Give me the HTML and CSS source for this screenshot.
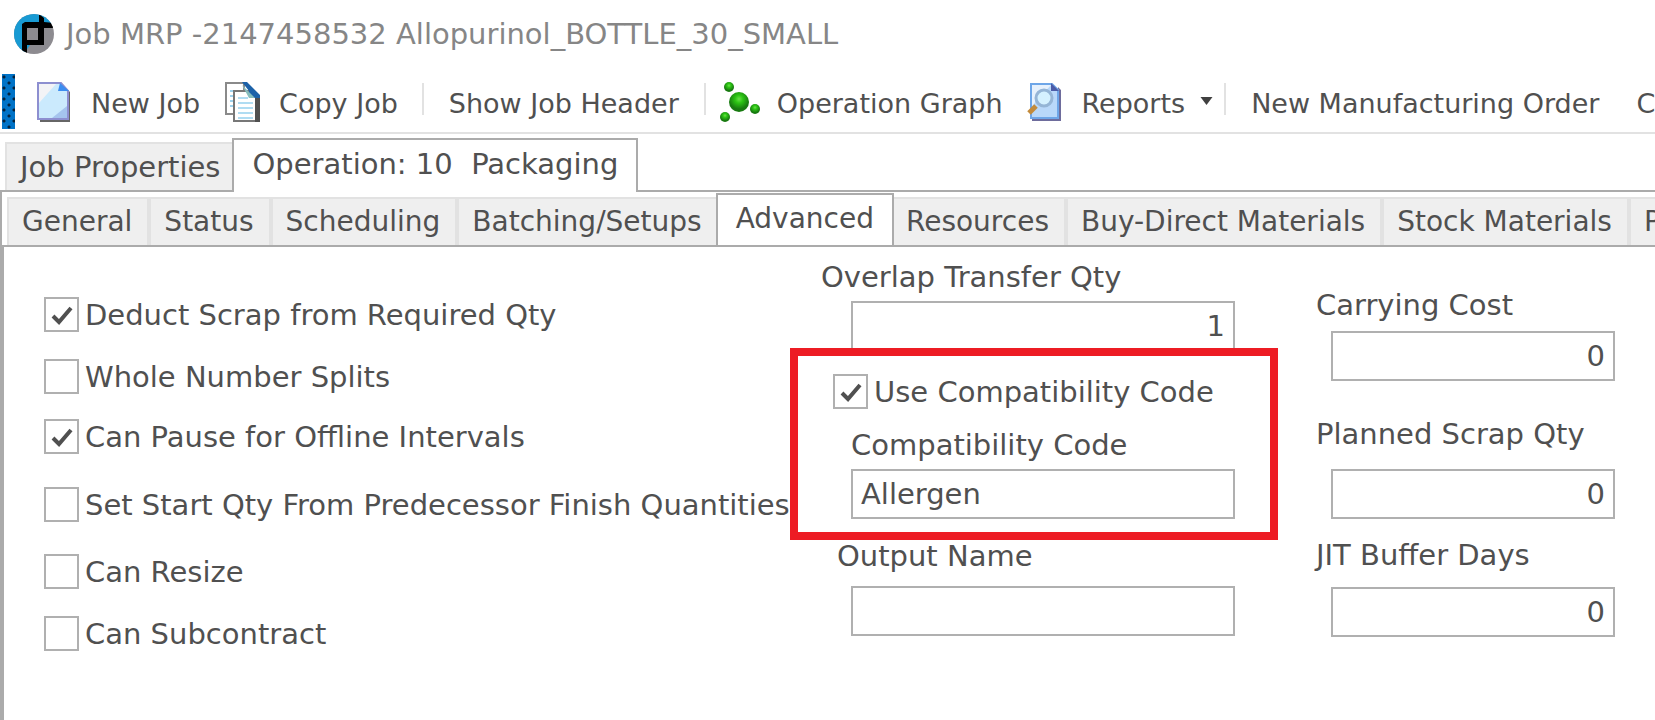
FILE: index.html
```html
<!DOCTYPE html>
<html lang="en">
<head>
	<meta charset="utf-8">
	<title>Job MRP</title>
	<link rel="stylesheet" href="styles.css">
</head>
<body>
	<header class="titlebar">
		<svg class="logo" viewBox="0 0 40 40" aria-hidden="true">
			<defs><clipPath id="disc"><circle cx="20" cy="20" r="20"/></clipPath></defs>
			<g clip-path="url(#disc)">
				<rect width="40" height="40" fill="#8d8b90"/>
				<path d="M0 0H30V10L10 40H0z" fill="#189ad3"/>
				<path d="M30 0H40V10H30z" fill="#189ad3"/>
				<path d="M25 0L30 4V8L40 9V14H30V31H13V40H8V10L11 8H25z" fill="#000"/>
				<rect x="13" y="14" width="11" height="12" fill="#8d8b90"/>
			</g>
		</svg>
		<h1>Job MRP -2147458532 Allopurinol_BOTTLE_30_SMALL</h1>
	</header>

	<div class="toolbar" role="toolbar">
		<span class="grip"></span>
		<button>
			<svg class="icon" viewBox="0 0 40 40" aria-hidden="true">
				<path d="M4 38V40H34V10L32 8V38z" fill="#666"/>
				<path d="M2 1H25L32 9V37H2z" fill="#cbeafd" stroke="#8d8fd0" stroke-width="2"/>
				<path d="M3 2H20L3 21z" fill="#f3f3f6"/>
				<path d="M31 24V36H16z" fill="#a5c4ee"/>
				<path d="M24 1L33 9H22z" fill="#3c8df0"/>
			</svg>
			New Job
		</button>
		<button>
			<svg class="icon" viewBox="0 0 40 40" aria-hidden="true">
				<path d="M2 1H20V32H2z" fill="#fff" stroke="#8a8a8a" stroke-width="2"/>
				<path d="M6 9H10M6 14H10M6 19H10M6 24H10" stroke="#9ed3ee" stroke-width="2"/>
				<path d="M10 9H25L33 15V39H10z" fill="#fff" stroke="#777" stroke-width="2"/>
				<path d="M31 14L36 13V40H31z" fill="#505050"/>
				<path d="M14 16H24M14 21H29M14 26H29M14 31H29M14 36H29" stroke="#b0dcf2" stroke-width="2"/>
				<path d="M18 0H23L36 13V16H25V9z" fill="#1c61a8"/>
				<path d="M18 3L25 16H31z" fill="#86bdbd"/>
			</svg>
			Copy Job
		</button>
		<span class="separator"></span>
		<button class="text-only">Show Job Header</button>
		<span class="separator"></span>
		<button class="graph">
			<svg class="icon" viewBox="0 0 40 40" aria-hidden="true">
				<defs>
					<radialGradient id="ball" cx="50%" cy="35%">
						<stop offset="0" stop-color="#6be04a"/>
						<stop offset="0.4" stop-color="#2cc414"/>
						<stop offset="1" stop-color="#187a10"/>
					</radialGradient>
				</defs>
				<circle cx="9" cy="5" r="5" fill="url(#ball)"/>
				<circle cx="19" cy="20" r="10" fill="url(#ball)"/>
				<circle cx="35" cy="27" r="5" fill="url(#ball)"/>
				<circle cx="5" cy="35" r="5" fill="url(#ball)"/>
			</svg>
			Operation Graph
		</button>
		<button class="reports">
			<svg class="icon" viewBox="0 0 40 40" aria-hidden="true">
				<path d="M7 36V39H36V8L33 5V36z" fill="#6e6c9c"/>
				<path d="M6 2H27L33 8V36H6z" fill="#b9d8fa" stroke="#6ea6e8" stroke-width="2"/>
				<path d="M7 3H26L7 24z" fill="#e6f1fd"/>
				<path d="M26 1L34 9H26z" fill="#4c5ca8"/>
				<path d="M11 24L4 31" stroke="#c38b3c" stroke-width="5"/>
				<circle cx="19" cy="16" r="8" fill="#d5f1ff" stroke="#95b5d6" stroke-width="3"/>
			</svg>
			Reports
			<svg class="arrow" viewBox="0 0 12 8" aria-hidden="true"><path d="M0 0H12L6 8z" fill="#404040"/></svg>
		</button>
		<span class="separator"></span>
		<button class="text-only">New Manufacturing Order</button>
		<button class="text-only">C</button>
	</div>

	<nav class="tabs job-tabs" role="tablist">
		<button role="tab">Job Properties</button>
		<button role="tab" class="active" aria-selected="true">Operation: 10&nbsp; Packaging</button>
	</nav>

	<main class="operation">
		<nav class="tabs detail-tabs" role="tablist">
			<button role="tab">General</button>
			<button role="tab">Status</button>
			<button role="tab">Scheduling</button>
			<button role="tab">Batching/Setups</button>
			<button role="tab" class="active" aria-selected="true">Advanced</button>
			<button role="tab">Resources</button>
			<button role="tab">Buy-Direct Materials</button>
			<button role="tab">Stock Materials</button>
			<button role="tab">P</button>
		</nav>

		<form class="advanced">
			<div class="options">
				<label class="check"><input type="checkbox" checked>Deduct Scrap from Required Qty</label>
				<label class="check"><input type="checkbox">Whole Number Splits</label>
				<label class="check"><input type="checkbox" checked>Can Pause for Offline Intervals</label>
				<label class="check"><input type="checkbox">Set Start Qty From Predecessor Finish Quantities</label>
				<label class="check"><input type="checkbox">Can Resize</label>
				<label class="check"><input type="checkbox">Can Subcontract</label>
			</div>

			<div class="codes">
				<div class="field overlap">
					<label for="overlap-qty">Overlap Transfer Qty</label>
					<input type="text" id="overlap-qty" class="number" value="1">
				</div>
				<div class="compatibility">
					<label class="check"><input type="checkbox" checked>Use Compatibility Code</label>
					<div class="field">
						<label for="compat-code">Compatibility Code</label>
						<input type="text" id="compat-code" value="Allergen">
					</div>
				</div>
				<div class="field output">
					<label for="output-name">Output Name</label>
					<input type="text" id="output-name">
				</div>
			</div>

			<div class="amounts">
				<div class="field">
					<label for="carrying-cost">Carrying Cost</label>
					<input type="text" id="carrying-cost" class="number" value="0">
				</div>
				<div class="field scrap">
					<label for="scrap-qty">Planned Scrap Qty</label>
					<input type="text" id="scrap-qty" class="number" value="0">
				</div>
				<div class="field buffer">
					<label for="buffer-days">JIT Buffer Days</label>
					<input type="text" id="buffer-days" class="number" value="0">
				</div>
			</div>
		</form>
	</main>
</body>
</html>
```
FILE: styles.css
```css
* {
	box-sizing: border-box;
}

body {
	margin: 0;
	min-height: 100vh;
	display: flex;
	flex-direction: column;
	overflow-x: hidden;
	font-family: Verdana, "DejaVu Sans", sans-serif;
	font-size: 29px;
	line-height: 32px;
	color: #505050;
	background: #fff;
}

button, input {
	font: inherit;
	color: inherit;
}

button {
	border: none;
	padding: 0;
	background: none;
	white-space: nowrap;
	cursor: pointer;
}

/* title bar */
.titlebar {
	display: flex;
	align-items: center;
	gap: 12px;
	height: 68px;
	padding-left: 14px;
}

.titlebar h1 {
	margin: 0;
	font-size: 29px;
	font-weight: normal;
	color: #868686;
	white-space: nowrap;
}

.logo {
	width: 40px;
	height: 40px;
}

/* toolbar */
.toolbar {
	display: flex;
	align-items: center;
	height: 66px;
	padding: 7px 0 0 2px;
	border-bottom: 2px solid #e2e2e2;
	font-size: 27px;
	overflow: hidden;
}

.toolbar > * {
	flex: none;
}

.toolbar button {
	display: flex;
	align-items: center;
	margin-right: 24px;
}

.toolbar .text-only {
	margin: 0 25px;
}

.toolbar .text-only + .text-only {
	margin-left: 12px;
}

.toolbar .graph {
	margin: 0 22px 0 14px;
}

.toolbar .reports {
	margin-right: 11px;
}

.grip {
	width: 13px;
	height: 55px;
	margin: 0 21px 4px 0;
	background:
		radial-gradient(circle at 2px 3px, #06223c 1px, transparent 2px) 0 0 / 10px 11px,
		radial-gradient(circle at 7px 9px, #06223c 1px, transparent 2px) 0 0 / 10px 11px,
		#0173c7;
}

.icon {
	width: 40px;
	height: 40px;
	margin: 0 15px 4px 0;
}

.graph .icon, .reports .icon {
	margin-right: 17px;
}

.arrow {
	width: 13px;
	height: 8px;
	margin: 0 0 6px 15px;
}

.separator {
	width: 2px;
	height: 32px;
	margin-bottom: 10px;
	background: #e2e2e2;
}

/* tabs */
.tabs {
	display: flex;
	align-items: flex-end;
}

.tabs button {
	flex: none;
	height: 48px;
	padding: 0 13px;
	border: 2px solid #e2e2e2;
	border-bottom: none;
	background: #efefef;
}

.tabs .active {
	height: 54px;
	padding: 0 18px 5px;
	border-color: #ababab;
	background: #fff;
	margin: 0 -3px -2px;
	z-index: 1;
}

.job-tabs {
	height: 56px;
	padding-left: 5px;
}

.operation {
	flex: 1;
	display: flex;
	flex-direction: column;
	border-top: 2px solid #ababab;
	border-left: 2px solid #ababab;
}

.detail-tabs {
	height: 53px;
	padding-left: 5px;
	font-size: 28px;
	overflow: hidden;
}

.detail-tabs button {
	padding-right: 15px;
}

/* advanced tab */
.advanced {
	flex: 1;
	display: grid;
	grid-template-columns: minmax(0, 786fr) minmax(0, 488fr) minmax(0, 377fr);
	border-top: 2px solid #ababab;
	border-left: 2px solid #ababab;
}

.check {
	display: flex;
	align-items: center;
	gap: 6px;
	height: 35px;
	white-space: nowrap;
}

.check input {
	appearance: none;
	flex: none;
	width: 35px;
	height: 35px;
	margin: 0;
	border: 2px solid #b0b0b0;
	background: #fff;
}

.check input:checked {
	background: url("data:image/svg+xml,%3Csvg xmlns='http://www.w3.org/2000/svg' viewBox='0 0 31 31'%3E%3Cpath d='M7 17L13 23L25 9' fill='none' stroke='%23505050' stroke-width='4'/%3E%3C/svg%3E");
}

.options {
	display: grid;
	grid-template-rows: 62px 60px 68px 67px 62px;
	align-content: start;
	padding: 50px 0 0 40px;
}

.field {
	display: flex;
	flex-direction: column;
}

.field input {
	height: 50px;
	padding: 0 8px;
	border: 2px solid #b0b0b0;
	background: #fff;
	min-width: 0;
}

.field .number {
	text-align: right;
}

.codes .field {
	gap: 8px;
	padding: 0 43px 0 61px;
}

.codes .overlap {
	padding-top: 14px;
}

.codes .overlap label {
	margin-left: -30px;
}

/* frame round the compatibility settings, drawn over the field above */
.codes .compatibility {
	position: relative;
	margin-top: -3px;
	height: 192px;
	padding: 18px 0 0;
	border: 8px solid #ed1c24;
	background: #fff;
}

.compatibility .check {
	padding-left: 35px;
}

.compatibility .field {
	gap: 8px;
	margin-top: 20px;
	padding: 0 35px 0 53px;
}

.codes .output {
	gap: 14px;
}

.codes .output label {
	margin-left: -14px;
}

.amounts {
	display: grid;
	grid-template-columns: minmax(0, 1fr);
	grid-template-rows: 129px 121px auto;
	align-content: start;
	padding: 42px 40px 0 38px;
}

.amounts .field {
	gap: 10px;
}

.amounts .scrap {
	gap: 19px;
}

.amounts .buffer {
	gap: 16px;
}

.amounts .field input {
	margin-left: 15px;
}
```
